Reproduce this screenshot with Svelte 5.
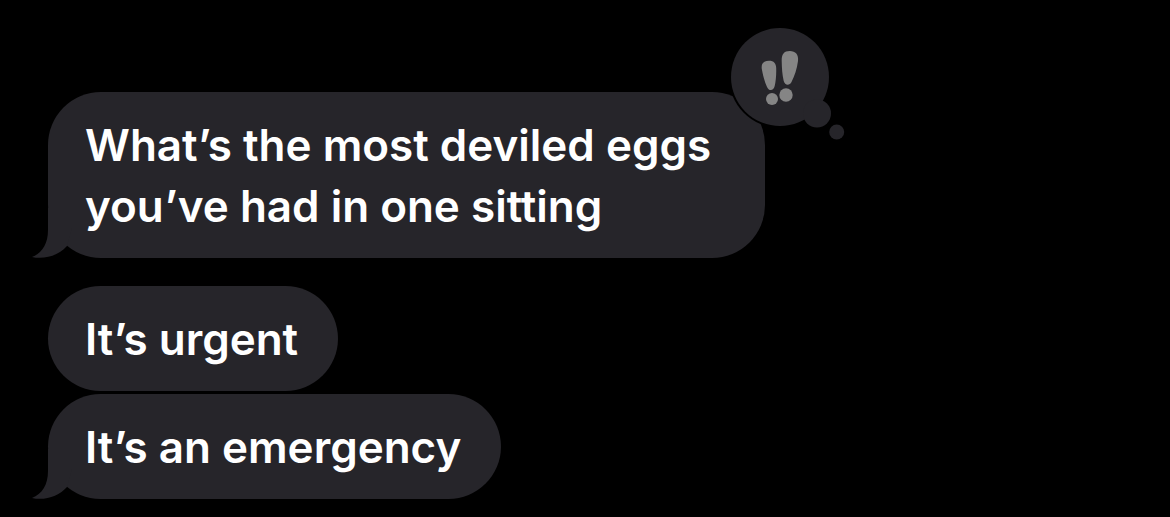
<script>
  const groups = [
    { reaction: true, bubbles: ['What’s the most deviled eggs you’ve had in one sitting'] },
    { reaction: false, bubbles: ['It’s urgent', 'It’s an emergency'] }
  ];
</script>

<main>
  {#each groups as group}
    <section>
      {#each group.bubbles as text, i}
        <div class="bubble">
          <p>{text}</p>
          {#if i === group.bubbles.length - 1}
            <svg class="tail" width="40" height="50" viewBox="0 0 40 50" aria-hidden="true">
              <path d="M16 0V22C16 36 10 45 0 49C13 52 27 47 35 38L40 20V0Z" />
            </svg>
          {/if}
          {#if group.reaction}
            <svg class="reaction" width="120" height="120" viewBox="0 0 120 120" role="img" aria-label="Emphasized">
              <circle class="edge" cx="53" cy="53" r="51" />
              <g class="cloud">
                <circle cx="53" cy="53" r="49" />
                <circle cx="90" cy="89.5" r="14" />
                <circle cx="109.7" cy="108" r="7.5" />
              </g>
              <g class="marks">
                <path d="M34.8 45C34 39 37 36.8 42 36.8C47 36.8 49 39.5 49.2 44C49.4 51 48.8 57 47.7 62C46.5 67.5 41.5 67.3 39.8 62.5C37.5 57 35.8 51 34.8 45Z" />
                <circle cx="45" cy="75" r="6" />
                <path d="M54.7 37C54.6 30 57 27 62.8 27C68.5 27 71.8 30.5 71 37C70 45 67.5 52 64.5 58C62.5 62 57.8 61.5 56.7 57C55.3 51 54.8 44 54.7 37Z" />
                <circle cx="59" cy="71" r="6.7" />
              </g>
            </svg>
          {/if}
        </div>
      {/each}
    </section>
  {/each}
</main>

<style>
  :global(body) { margin: 0; background: #000; }
  main {
    display: flex;
    flex-direction: column;
    gap: 28px;
    padding: 92px 48px 18px;
    color: #fff;
    font: 600 44px/61px Inter, sans-serif;
    font-variant-ligatures: none;
  }
  section { display: flex; flex-direction: column; align-items: flex-start; gap: 3px; }
  .bubble {
    position: relative;
    box-sizing: border-box;
    max-width: 717px;
    padding: 23px 40px 21px 37px;
    border-radius: 53px;
    background: #26252a;
  }
  p { margin: 0; }
  svg { position: absolute; overflow: visible; }
  .tail { left: -16px; bottom: 0; fill: #26252a; }
  .reaction { right: -82px; top: -68px; }
  .edge { fill: #000; }
  .cloud { fill: #26252a; }
  .marks { fill: #858585; }
</style>
